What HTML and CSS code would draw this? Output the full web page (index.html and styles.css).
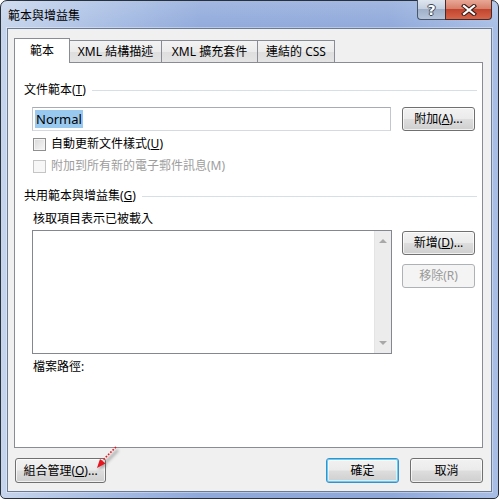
FILE: index.html
```html
<!DOCTYPE html>
<html lang="zh-Hant">
<head>
<meta charset="utf-8">
<title>範本與增益集</title>
<link rel="stylesheet" href="styles.css">
</head>
<body>
<div class="window">
  <div class="titlebar">
    <span class="title">範本與增益集</span>
    <div class="caption">
      <div class="cap help"><span class="q">?</span></div>
      <div class="cap close">
        <svg width="16" height="12" viewBox="0 0 16 12">
          <path d="M3 2 L13 10 M13 2 L3 10" stroke="#3a1c18" stroke-width="4.2" stroke-linecap="square"/>
          <path d="M3 2 L13 10 M13 2 L3 10" stroke="#ffffff" stroke-width="2.2" stroke-linecap="square"/>
        </svg>
      </div>
    </div>
  </div>
  <div class="client">
    <div class="tabs">
      <div class="tab active w1">範本</div>
      <div class="tab w2">XML 結構描述</div>
      <div class="tab w3">XML 擴充套件</div>
      <div class="tab w4">連結的 CSS</div>
    </div>
    <div class="panel">
      <div class="group-head"><span>文件範本(<u>T</u>)</span><span class="rule"></span></div>
      <div class="input-row">
        <div class="textbox"><span class="sel">Normal</span></div>
        <div class="btn w73">附加(<u>A</u>)...</div>
      </div>
      <div class="check-row"><span class="cb"></span><span>自動更新文件樣式(<u>U</u>)</span></div>
      <div class="check-row disabled"><span class="cb"></span><span>附加到所有新的電子郵件訊息(M)</span></div>
      <div class="group-head g2"><span>共用範本與增益集(<u>G</u>)</span><span class="rule"></span></div>
      <div class="sub-label">核取項目表示已被載入</div>
      <div class="list-row">
        <div class="listbox">
          <div class="list-items"></div>
          <div class="scrollbar">
            <span class="arr up"></span>
            <span class="arr down"></span>
          </div>
        </div>
        <div class="btn-col">
          <div class="btn w73">新增(<u>D</u>)...</div>
          <div class="btn w73 disabled">移除(R)</div>
        </div>
      </div>
      <div class="sub-label path">檔案路徑:</div>
    </div>
    <div class="footer">
      <div class="btn organizer">組合管理(<u>O</u>)...</div>
      <div class="spacer"></div>
      <div class="btn w73 default">確定</div>
      <div class="btn w73">取消</div>
    </div>
  </div>
  <svg class="annot" width="40" height="40" viewBox="0 0 40 40">
    <defs>
      <filter id="blur" x="-50%" y="-50%" width="200%" height="200%"><feGaussianBlur stdDeviation="1.6"/></filter>
    </defs>
    <g filter="url(#blur)" opacity="0.45">
      <line x1="28" y1="8" x2="14" y2="22" stroke="#555" stroke-width="2.5"/>
      <path d="M8 28 L12 19 L17 24 Z" fill="#555"/>
    </g>
    <line x1="26" y1="5" x2="12" y2="19" stroke="#e8141e" stroke-width="1.6" stroke-dasharray="1.6 1.6"/>
    <path d="M7 26 L10 17 L15.5 21.5 Z" fill="#e8141e"/>
  </svg>
</div>
</body>
</html>
```
FILE: styles.css
```css
* { box-sizing: border-box; }
html, body { margin: 0; padding: 0; background: #ffffff; }
body {
  font-family: "Noto Sans", "Noto Sans CJK TC", sans-serif;
  font-size: 12px;
  line-height: 16px;
  color: #000;
}
u { text-decoration: underline; text-underline-offset: 1px; }

.window {
  position: relative;
  width: 499px;
  height: 499px;
  border: 1px solid #28303c;
  border-radius: 7px 7px 5px 5px;
  background:
    linear-gradient(180deg, rgba(255,255,255,0.18), rgba(255,255,255,0) 30px),
    linear-gradient(90deg, #c6d5ec 0, #abc0e5 18%, #8fa9db 40%, #8ea8da 78%, #a8bee5 100%);
  padding: 0 6px 6px 6px;
  display: flex;
  flex-direction: column;
}

.titlebar {
  height: 27px;
  display: flex;
  align-items: flex-start;
}
.title {
  font-family: "Noto Sans CJK TC", sans-serif;
  margin-top: 6px;
  margin-left: 1px;
  line-height: 16px;
  color: #000;
}
.caption { margin-left: auto; display: flex; }
.cap {
  height: 20px;
  margin-top: -1px;
  border: 1px solid #4a5568;
  border-top: none;
  display: flex;
  align-items: center;
  justify-content: center;
}
.help {
  width: 28px;
  border-radius: 0 0 0 4px;
  border-right: none;
  background: linear-gradient(180deg, #dfe6ef 0, #c5d0e0 45%, #9fb0c8 50%, #b6c5da 100%);
}
.q {
  font-family: "DejaVu Sans", sans-serif;
  font-weight: bold;
  font-size: 14px;
  color: #fff;
  text-shadow: 1px 0 0 #3a4556, -1px 0 0 #3a4556, 0 1px 0 #3a4556, 0 -1px 0 #3a4556;
}
.close {
  width: 47px;
  border-radius: 0 0 4px 0;
  border-color: #4a2a26;
  background: linear-gradient(180deg, #e8a896 0, #d7806b 45%, #c2452f 50%, #d5654a 100%);
}

.client {
  flex: 1;
  background: #f0f0f0;
  border: 1px solid #6a7b93;
  box-shadow: 0 0 0 1px rgba(255,255,255,0.35);
  padding: 9px 8px 8px 6px;
  display: flex;
  flex-direction: column;
}

.tabs {
  display: flex;
  align-items: flex-end;
  height: 24px;
  position: relative;
  z-index: 1;
}
.tab {
  height: 22px;
  border: 1px solid #898c95;
  border-bottom: none;
  margin-left: -1px;
  background: linear-gradient(180deg, #f3f3f3 0, #ebebeb 50%, #dedede 51%, #e4e4e4 100%);
  display: flex;
  align-items: center;
  justify-content: center;
  padding-top: 1px;
  white-space: nowrap;
}
.tab.active {
  margin-left: 0;
  height: 25px;
  margin-bottom: -1px;
  background: #fff;
  padding-top: 0;
  position: relative;
  z-index: 2;
}
.w1 { width: 56px; }
.w2 { width: 93px; }
.w3 { width: 97px; }
.w4 { width: 78px; }

.panel {
  flex: 1;
  background: #fff;
  border: 1px solid #898c95;
  padding: 19px 5px 0 9px;
  display: flex;
  flex-direction: column;
}

.group-head {
  display: flex;
  align-items: center;
  height: 16px;
}
.group-head .rule {
  flex: 1;
  height: 1px;
  background: #d5dfe5;
  margin-left: 6px;
}
.g2 { margin-top: 11px; }

.input-row {
  display: flex;
  gap: 11px;
  margin-top: 9px;
  margin-left: 8px;
  margin-right: 2px;
}
.textbox {
  flex: 1;
  height: 24px;
  border: 1px solid #a5acb5;
  border-left-color: #c3c7cd;
  border-right-color: #c3c7cd;
  border-bottom-color: #d5dae0;
  padding: 2px 0 0 2px;
  background: #fff;
}
.sel {
  display: inline-block;
  background: #99c9ef;
  padding: 0 1px;
  line-height: 18px;
  font-size: 13px;
}

.btn {
  height: 24px;
  border: 1px solid #707070;
  border-radius: 3px;
  background: linear-gradient(180deg, #f2f2f2 0, #ebebeb 48%, #dddddd 52%, #cfcfcf 100%);
  box-shadow: inset 0 0 0 1px rgba(255,255,255,0.7);
  display: flex;
  align-items: center;
  justify-content: center;
  white-space: nowrap;
}
.w73 { width: 73px; }
.btn.disabled {
  border-color: #adb2b5;
  background: #f4f4f4;
  color: #9a9a9a;
  box-shadow: none;
}
.btn.default {
  border-color: #3c8fc8;
  box-shadow: inset 0 0 0 1px #5fd1f6, inset 0 0 0 2px rgba(255,255,255,0.5);
}

.check-row {
  display: flex;
  align-items: center;
  height: 22px;
  margin-left: 9px;
}
.check-row:first-of-type { margin-top: 0; }
.input-row + .check-row { margin-top: 2px; }
.cb {
  width: 13px;
  height: 13px;
  border: 1px solid #8f8f8f;
  background: linear-gradient(135deg, #d8d8d8 0, #f7f7f7 100%);
  box-shadow: inset 0 0 0 1px #f4f4f4;
  margin-right: 5px;
  flex: none;
}
.check-row.disabled { color: #9d9d9d; }
.check-row.disabled .cb {
  border-color: #c5c5c5;
  background: #f7f7f7;
  box-shadow: none;
}

.sub-label {
  margin-left: 9px;
  margin-top: 7px;
  height: 16px;
}
.sub-label.path { margin-top: 5px; }

.list-row {
  display: flex;
  gap: 10px;
  margin-top: 3px;
  margin-left: 8px;
  margin-right: 2px;
}
.listbox {
  flex: 1;
  height: 124px;
  border: 1px solid #828790;
  background: #fff;
  display: flex;
}
.list-items { flex: 1; }
.scrollbar {
  width: 17px;
  background: #ececec;
  border-left: 1px solid #e4e4e4;
  display: flex;
  flex-direction: column;
  justify-content: space-between;
  align-items: center;
  padding: 8px 0 8px 0;
}
.arr {
  width: 0;
  height: 0;
  border-left: 4px solid transparent;
  border-right: 4px solid transparent;
}
.arr.up { border-bottom: 4px solid #a8a8a8; }
.arr.down { border-top: 4px solid #a8a8a8; }

.btn-col {
  display: flex;
  flex-direction: column;
  gap: 9px;
  padding-top: 1px;
}

.footer {
  display: flex;
  gap: 11px;
  margin-top: 10px;
  padding-left: 1px;
  height: 25px;
}
.footer .btn { height: 25px; }
.organizer { width: 91px; }
.spacer { flex: 1; }

.annot {
  position: absolute;
  left: 89px;
  top: 441px;
}
```
